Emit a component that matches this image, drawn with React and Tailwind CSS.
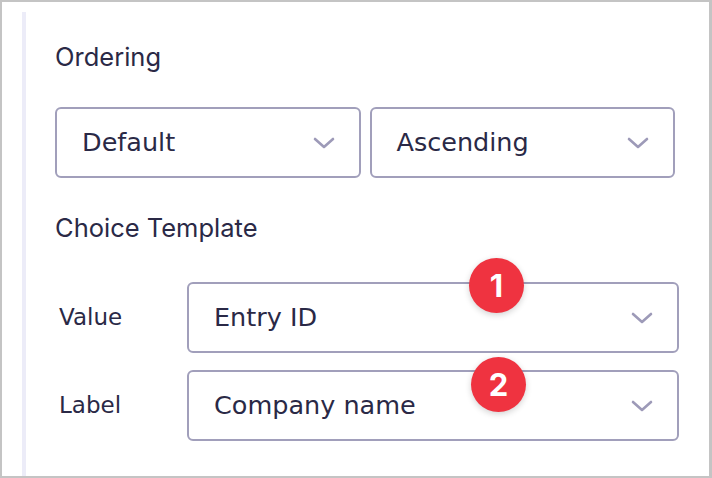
import React from 'react';

const ink = 'text-[#2a2946]';

function Chevron() {
  return (
    <svg width="22" height="12" viewBox="0 0 22 12" fill="none" className="shrink-0">
      <polyline points="2,2 11,10 20,2" stroke="#9d9ab8" strokeWidth="2.6" strokeLinecap="round" strokeLinejoin="round" />
    </svg>
  );
}

function Select({ value, className = '', children }) {
  return (
    <div
      className={`relative flex h-[71px] items-center justify-between rounded-[6px] border-2 border-[#a19fbb] bg-white pl-[25px] pr-[24px] ${className}`}
    >
      <span className={`font-['DejaVu_Sans',sans-serif] text-[25.5px] ${ink}`}>{value}</span>
      <Chevron />
      {children}
    </div>
  );
}

function Badge({ n, className }) {
  return (
    <div
      className={`absolute flex h-[55px] w-[55px] items-center justify-center rounded-full bg-[#ef3340] font-['Inter',sans-serif] text-[31px] font-bold leading-none text-white shadow-[0_2px_6px_rgba(0,0,0,0.18)] ${className}`}
    >
      {n}
    </div>
  );
}

function Heading({ children, className = '' }) {
  return (
    <div className={`font-['Inter',sans-serif] text-[25.5px] leading-[30px] ${ink} ${className}`}>{children}</div>
  );
}

export default function App() {
  return (
    <div className="flex h-[478px] w-[712px] border-2 border-r-[3px] border-[#c4c4c4] bg-white pl-[20px] pt-[10px]">
      <div className="w-[4px] self-stretch bg-[#ececf8]" />
      <div className="flex flex-col pl-[29px]">
        <Heading className="mt-[30px]">Ordering</Heading>

        <div className="mt-[35px] flex w-[620px] gap-[9px]">
          <Select value="Default" className="flex-1" />
          <Select value="Ascending" className="flex-1" />
        </div>

        <Heading className="mt-[35px]">Choice Template</Heading>

        <div className="mt-[39px] flex w-[624px] items-center">
          <span className={`w-[132px] pl-[4px] font-['DejaVu_Sans',sans-serif] text-[23px] ${ink}`}>Value</span>
          <Select value="Entry ID" className="flex-1">
            <Badge n="1" className="left-[280px] top-[-26px]" />
          </Select>
        </div>

        <div className="mt-[17px] flex w-[624px] items-center">
          <span className={`w-[132px] pl-[4px] font-['DejaVu_Sans',sans-serif] text-[23px] ${ink}`}>Label</span>
          <Select value="Company name" className="flex-1">
            <Badge n="2" className="left-[282px] top-[-15px]" />
          </Select>
        </div>
      </div>
    </div>
  );
}
